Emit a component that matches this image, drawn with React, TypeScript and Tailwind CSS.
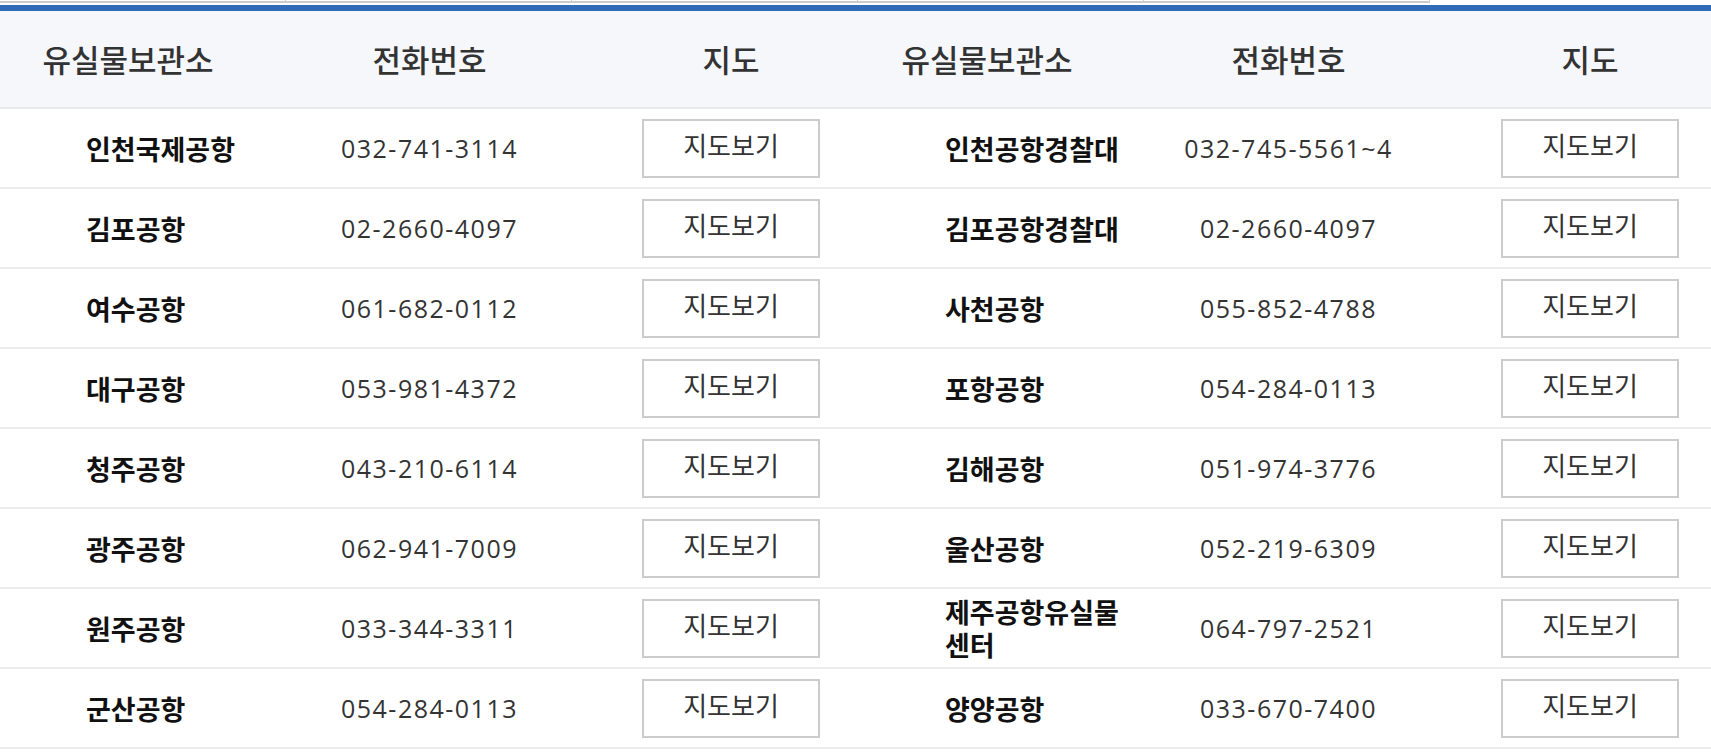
import React from "react";

const left = [
  ["인천국제공항", "032-741-3114"],
  ["김포공항", "02-2660-4097"],
  ["여수공항", "061-682-0112"],
  ["대구공항", "053-981-4372"],
  ["청주공항", "043-210-6114"],
  ["광주공항", "062-941-7009"],
  ["원주공항", "033-344-3311"],
  ["군산공항", "054-284-0113"],
];
const right = [
  ["인천공항경찰대", "032-745-5561~4"],
  ["김포공항경찰대", "02-2660-4097"],
  ["사천공항", "055-852-4788"],
  ["포항공항", "054-284-0113"],
  ["김해공항", "051-974-3776"],
  ["울산공항", "052-219-6309"],
  ["제주공항유실물센터", "064-797-2521"],
  ["양양공항", "033-670-7400"],
];

const grid = "grid grid-cols-[256px_347px_256px_256px_347px_256px]";

function HeadCell({ children }: { children: React.ReactNode }) {
  return (
    <div className="flex items-center justify-center text-[31px] leading-[38px] font-medium text-[#333]">
      {children}
    </div>
  );
}

function Cells({ name, phone }: { name: string; phone: string }) {
  return (
    <>
      <div className="flex items-center pl-[86px] min-w-0">
        <span className="block shrink-0 w-[192px] text-[27px] leading-[33px] font-bold text-[#111]">
          {name}
        </span>
      </div>
      <div className="flex items-center justify-center">
        <span className="font-['Open_Sans','Noto_Sans_CJK_KR',sans-serif] text-[25px] leading-[33px] tracking-[1.5px] text-[#333]">
          {phone}
        </span>
      </div>
      <div className="flex items-center justify-center">
        <button className="w-[178px] h-[59px] border-2 border-[#cccccc] bg-white text-[26px] leading-[30px] text-[#333] pb-[6px]">
          지도보기
        </button>
      </div>
    </>
  );
}

export default function App() {
  return (
    <div className="w-[1711px] h-[752px] overflow-hidden bg-white font-['Noto_Sans_CJK_KR','Noto_Sans',sans-serif]">
      <div className="w-[1718px]">
        <div className="flex h-[3px]">
          {[0, 1, 2, 3, 4].map((i) => (
            <div
              key={i}
              className="w-[286px] h-[3px] border-b-2 border-r border-[#cccccc] bg-white"
            />
          ))}
          <div className="w-[286px] h-[3px] bg-white" />
        </div>
        <div className="h-[2px] bg-white" />
        <div className="h-[6px] bg-[#2f6bb6]" />
        <div className={`${grid} h-[98px] bg-[#f5f7fb] border-b-2 border-[#e9e9e9]`}>
          <HeadCell>유실물보관소</HeadCell>
          <HeadCell>전화번호</HeadCell>
          <HeadCell>지도</HeadCell>
          <HeadCell>유실물보관소</HeadCell>
          <HeadCell>전화번호</HeadCell>
          <HeadCell>지도</HeadCell>
        </div>
        {left.map((l, i) => (
          <div key={i} className={`${grid} h-[80px] border-b-2 border-[#ebebeb]`}>
            <Cells name={l[0]} phone={l[1]} />
            <Cells name={right[i][0]} phone={right[i][1]} />
          </div>
        ))}
      </div>
    </div>
  );
}
